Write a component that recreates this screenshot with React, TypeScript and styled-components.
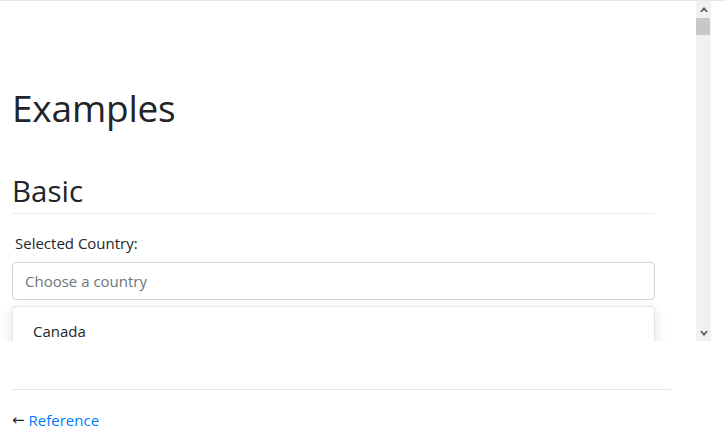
import React from "react";
import styled, { createGlobalStyle } from "styled-components";

const GlobalStyle = createGlobalStyle`
  html, body {
    margin: 0;
    padding: 0;
    background: #ffffff;
  }
  body {
    font-family: "Open Sans", "Noto Sans", sans-serif;
    color: #212529;
    font-size: 15px;
    line-height: 1.5;
  }
`;

const Page = styled.div`
  display: flex;
  flex-direction: column;
  width: 726px;
  border-top: 1px solid #e6e6ec;
`;

const Frame = styled.div`
  display: flex;
  width: 711px;
  height: 340px;
`;

const Viewport = styled.div`
  flex: 1;
  overflow: hidden;
`;

const FrameBody = styled.div`
  padding: 85px 41px 0 12px;
`;

const Scrollbar = styled.div`
  display: flex;
  flex-direction: column;
  align-items: center;
  width: 15px;
  background: #f1f1f1;
`;

const ScrollButton = styled.div`
  display: flex;
  align-items: center;
  justify-content: center;
  width: 15px;
  height: 16px;
  flex-shrink: 0;
`;

const Thumb = styled.div`
  width: 14px;
  height: 17px;
  margin: 1px 1px 0 0;
  background: #c8c8c8;
`;

const Track = styled.div`
  flex: 1;
`;

const Title = styled.h1`
  margin: 0 0 43px;
  font-size: 37px;
  font-weight: 400;
  line-height: 44px;
  letter-spacing: -0.2px;
`;

const Section = styled.h2`
  margin: 0;
  padding-bottom: 4px;
  font-size: 29.5px;
  font-weight: 400;
  line-height: 36px;
  border-bottom: 1px solid #e9ecef;
`;

const Label = styled.label`
  display: block;
  margin: 18px 0 7px 3px;
  font-size: 15px;
`;

const Field = styled.input`
  box-sizing: border-box;
  display: block;
  width: 100%;
  height: 38px;
  padding: 6px 12px;
  font-family: inherit;
  font-size: 15px;
  color: #495057;
  border: 1px solid #ced4da;
  border-radius: 4px;
  outline: none;

  &::placeholder {
    color: #6c757d;
  }
`;

const Menu = styled.ul`
  list-style: none;
  margin: 6px 0 0;
  padding: 7px 0 0;
  min-height: 120px;
  border: 1px solid rgba(0, 0, 0, 0.1);
  border-radius: 4px;
  box-shadow: 0 4px 14px rgba(0, 0, 0, 0.12);
  background: #ffffff;
`;

const Item = styled.li`
  padding: 6px 20px;
  font-size: 15px;
  color: #212529;
`;

const Footer = styled.footer`
  display: flex;
  align-items: center;
  margin: 48px 55px 0 12px;
  padding-top: 19px;
  border-top: 1px solid #e6e6e6;
`;

const Arrow = styled.span`
  font-family: "DejaVu Sans", sans-serif;
  font-size: 15px;
  color: #212529;
  margin-right: 4px;
`;

const BackLink = styled.a`
  font-size: 15px;
  color: #007bff;
  text-decoration: none;
`;

function Chevron({ up }: { up?: boolean }) {
  return (
    <svg width="8" height="5" viewBox="0 0 8 5">
      <path
        d={up ? "M0 5 L4 0 L8 5 L6 5 L4 2.5 L2 5 Z" : "M0 0 L4 5 L8 0 L6 0 L4 2.5 L2 0 Z"}
        fill="#505050"
      />
    </svg>
  );
}

export default function App() {
  return (
    <Page>
      <GlobalStyle />
      <Frame>
        <Viewport>
          <FrameBody>
            <Title>Examples</Title>
            <Section>Basic</Section>
            <Label htmlFor="country">Selected Country:</Label>
            <Field id="country" placeholder="Choose a country" />
            <Menu>
              <Item>Canada</Item>
            </Menu>
          </FrameBody>
        </Viewport>
        <Scrollbar>
          <ScrollButton>
            <Chevron up />
          </ScrollButton>
          <Thumb />
          <Track />
          <ScrollButton>
            <Chevron />
          </ScrollButton>
        </Scrollbar>
      </Frame>
      <Footer>
        <Arrow>←</Arrow>
        <BackLink href="#">Reference</BackLink>
      </Footer>
    </Page>
  );
}
